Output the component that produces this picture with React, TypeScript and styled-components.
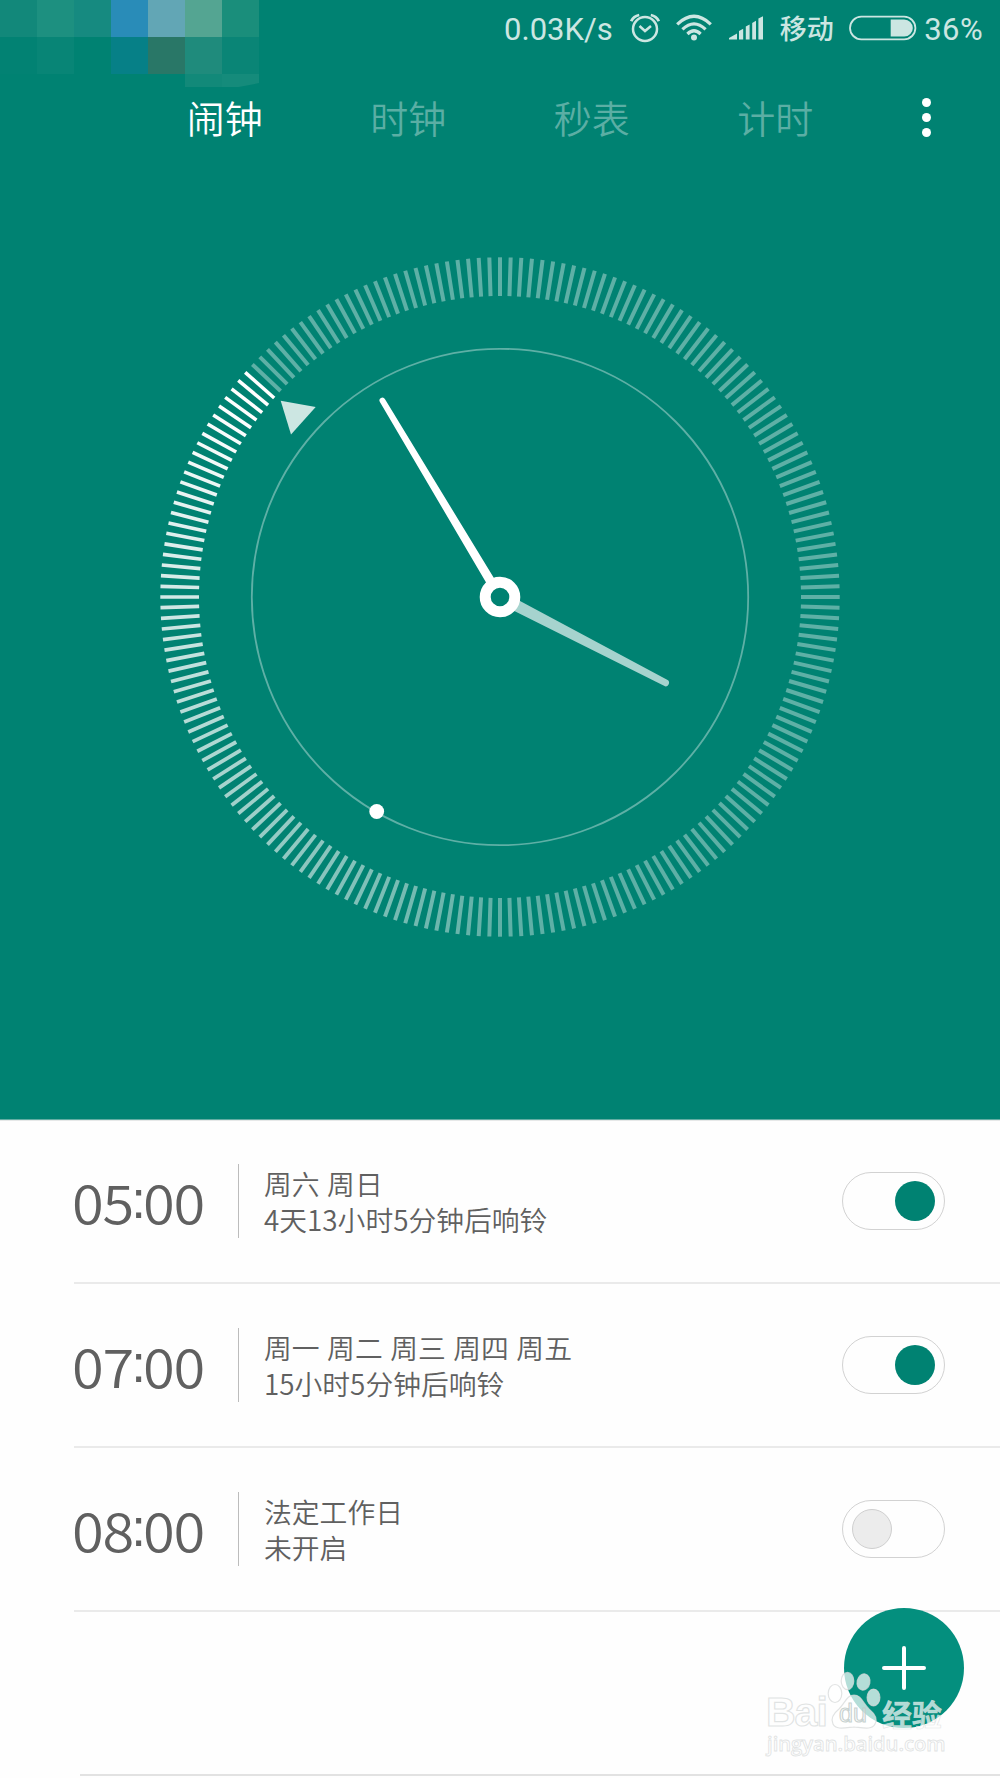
import React from "react";
import styled, { createGlobalStyle } from "styled-components";

const TEAL = "#008272";
const STATUS = "#cce6e2";

const GlobalStyle = createGlobalStyle`
  *, *::before, *::after { box-sizing: border-box; }
  body {
    margin: 0;
    background: #fefefe;
    font-family: "Noto Sans CJK SC", "Noto Sans", sans-serif;
  }
`;

const Screen = styled.div`
  position: relative;
  width: 1000px;
  height: 1778px;
  overflow: hidden;
  background: #fefefe;
  display: flex;
  flex-direction: column;
`;

const Header = styled.header`
  position: relative;
  height: 1120px;
  flex: none;
  background: ${TEAL};
  border-bottom: 1px solid #62aca2;
  box-shadow: 0 1px 0 #e6e8e8;
  display: flex;
  flex-direction: column;
`;

const StatusBar = styled.div`
  height: 56px;
  display: flex;
  align-items: center;
  justify-content: flex-end;
  padding-right: 17px;
  color: ${STATUS};
`;

const StatusText = styled.span<{ $size: number; $gap: number; $weight?: number; $spacing?: number }>`
  font-family: Roboto, "Noto Sans CJK SC", sans-serif;
  font-size: ${(p) => p.$size}px;
  font-weight: ${(p) => p.$weight ?? 400};
  letter-spacing: ${(p) => p.$spacing ?? 0}px;
  line-height: 56px;
  padding-top: 3px;
  margin-right: ${(p) => p.$gap}px;
  white-space: nowrap;
`;

const StatusIcon = styled.svg<{ $gap: number }>`
  flex: none;
  display: block;
  margin-right: ${(p) => p.$gap}px;
`;

const Mosaic = styled.div`
  position: absolute;
  left: 0;
  top: 0;
  display: grid;
  grid-template-columns: repeat(7, 37px);
  grid-template-rows: 37px 37px 13px;
`;

const Block = styled.div<{ $color: string; $cut?: boolean }>`
  background: ${(p) => p.$color};
  clip-path: ${(p) => (p.$cut ? "polygon(0 0, 100% 0, 100% 70%, 45% 100%, 0 100%)" : "none")};
`;

const TabBar = styled.nav`
  height: 122px;
  display: flex;
  align-items: center;
  padding-left: 133px;
`;

const Tab = styled.button<{ $active?: boolean }>`
  width: 183.5px;
  padding: 0;
  border: 0;
  background: none;
  font-family: inherit;
  font-size: 38px;
  font-weight: 350;
  line-height: 56px;
  color: ${(p) => (p.$active ? "#ffffff" : "#5baea4")};
`;

const MoreButton = styled.button`
  margin-left: 52.5px;
  width: 14px;
  height: 39px;
  padding: 0;
  border: 0;
  background: none;
  display: flex;
  flex-direction: column;
  align-items: center;
  justify-content: space-between;
`;

const Dot = styled.span`
  width: 9px;
  height: 9px;
  border-radius: 50%;
  background: #fff;
`;

const DialWrap = styled.div`
  display: flex;
  justify-content: center;
  padding-top: 69.3px;
`;

const AlarmList = styled.main`
  display: flex;
  flex-direction: column;
  padding-left: 74px;
`;

const AlarmRow = styled.section`
  height: 164px;
  display: flex;
  align-items: center;
  border-bottom: 2px solid #eaeaea;
  padding-right: 55px;
`;

const Time = styled.div`
  width: 166px;
  margin-left: -2px;
  display: flex;
  align-items: center;
  font-size: 54px;
  font-weight: 350;
  line-height: 54px;
  color: #606060;
`;

const Digits = styled.span`
  width: 62px;
  letter-spacing: -1.1px;
  transform: scaleX(1.07);
  transform-origin: left center;
`;

const Colon = styled.span`
  width: 9px;
  display: flex;
  justify-content: center;
  font-family: "Liberation Sans", Arial, sans-serif;
  font-size: 53px;
  line-height: 54px;
  padding-bottom: 3px;
`;

const Info = styled.div`
  flex: 1;
  height: 74px;
  border-left: 1px solid #bcbcbc;
  padding: 0.6px 0 0 25px;
  font-size: 27.8px;
  font-weight: 350;
  line-height: 36px;
  color: #606060;
  word-spacing: 1.3px;
`;

const Line = styled.div`
  white-space: nowrap;
`;

const Switch = styled.button<{ $on: boolean }>`
  width: 103px;
  height: 58px;
  border: 1.4px solid #d2d2d2;
  border-radius: 29px;
  background: #fefefe;
  padding: 0 9px;
  display: flex;
  align-items: center;
  justify-content: ${(p) => (p.$on ? "flex-end" : "flex-start")};
`;

const Knob = styled.span<{ $on: boolean }>`
  width: 40px;
  height: 40px;
  border-radius: 50%;
  background: ${(p) => (p.$on ? TEAL : "#ececec")};
  border: ${(p) => (p.$on ? "none" : "1px solid #cfcfcf")};
  margin-top: -1px;
`;

const NextRow = styled.div`
  height: 164px;
  margin-left: 6px;
  border-bottom: 2px solid #e2e2e2;
`;

const AddButton = styled.button`
  position: absolute;
  left: 843.5px;
  top: 1607.5px;
  width: 120.4px;
  height: 120.4px;
  border: 0;
  padding: 0;
  border-radius: 50%;
  background: #048f7e;
  display: flex;
  align-items: center;
  justify-content: center;
`;

const Watermark = styled.div`
  position: absolute;
  left: 767px;
  top: 1670px;
  width: 190px;
  height: 90px;
  color: rgba(255, 255, 255, 0.7);
  -webkit-text-stroke: 1.2px rgba(215, 218, 218, 0.75);
`;

const MarkRow = styled.div`
  position: relative;
  height: 60px;
  display: flex;
  align-items: flex-end;
  font-family: "Liberation Sans", Arial, sans-serif;
  font-weight: 700;
  line-height: 36px;
`;

const Bai = styled.span`
  font-size: 41px;
  width: 63px;
  margin-left: -1px;
  letter-spacing: -1px;
`;

const Paw = styled.svg`
  position: absolute;
  left: 58px;
  top: 0;
`;

const Du = styled.span`
  position: relative;
  width: 53px;
  padding-left: 10px;
  font-size: 25px;
  font-weight: 400;
  line-height: 33px;
  color: rgba(255, 255, 255, 0.3);
  -webkit-text-stroke-color: rgba(190, 202, 200, 0.85);
`;

const Jingyan = styled.span`
  font-family: "Noto Sans CJK SC", sans-serif;
  font-size: 30px;
  font-weight: 700;
  line-height: 33px;
  white-space: nowrap;
  -webkit-text-stroke-width: 0.6px;
`;

const Site = styled.div`
  font-family: "Open Sans", sans-serif;
  font-size: 20.2px;
  font-weight: 600;
  line-height: 28px;
  margin-top: -1px;
  -webkit-text-stroke-width: 0.9px;
`;

const MOSAIC: { color: string; cut?: boolean }[] = [
  { color: "#12887a" }, { color: "#1d9080" }, { color: "#168a80" }, { color: "#298cb8" },
  { color: "#62a6b5" }, { color: "#54a592" }, { color: "#1a8e7b" },
  { color: "#028273" }, { color: "#088576" }, { color: "#008272" }, { color: "#068087" },
  { color: "#297767" }, { color: "#1f8b7c" }, { color: "#0a8576" },
  { color: "transparent" }, { color: "transparent" }, { color: "transparent" }, { color: "transparent" },
  { color: "transparent" }, { color: "#128979" }, { color: "#158b7b", cut: true },
];

const TICK_COUNT = 200;
const HEAD_TICK = 173;
const TAIL_TICK = 100;

const Dial = () => {
  const ticks = Array.from({ length: TICK_COUNT }, (_, i) => {
    const lit = i >= TAIL_TICK && i <= HEAD_TICK;
    const t = lit ? (i - TAIL_TICK) / (HEAD_TICK - TAIL_TICK) : 0;
    return { angle: i * 1.8, opacity: Math.min(1, 0.37 + 0.66 * t), width: 4 - 0.5 * t };
  });
  return (
    <svg width="700" height="700" viewBox="-350 -350 700 700">
      {ticks.map((t) => (
        <line key={t.angle} x1="0" x2="0" y1="-339.7" y2="-301" stroke="#fff"
          strokeWidth={t.width} strokeOpacity={t.opacity} transform={`rotate(${t.angle})`} />
      ))}
      <circle r="248.2" fill="none" stroke="#fff" strokeOpacity="0.37" strokeWidth="1.8" />
      <circle cx="-123.3" cy="214.5" r="7.4" fill="#fff" />
      <path d="M-219.3 -196.3L-184.3 -190L-209 -162.5Z" fill={STATUS} />
      <g transform="rotate(117.4)">
        <path d="M-5.8 -18L-3.4 -186.5A3.4 3.4 0 0 1 3.4 -186.5L5.8 -18Z" fill="#a6d3ce" />
      </g>
      <g transform="rotate(-30.9)">
        <path d="M-4.5 -17L-2.9 -229A2.9 2.9 0 0 1 2.9 -229L4.5 -17Z" fill="#fff" />
      </g>
      <circle r="14.8" fill={TEAL} stroke="#fff" strokeWidth="11" />
    </svg>
  );
};

const AlarmIcon = () => (
  <StatusIcon $gap={16} width="30" height="30" viewBox="0 0 30 30" fill="none" stroke={STATUS}>
    <circle cx="15" cy="16" r="12" strokeWidth="2.5" />
    <path d="M9.5 13L15 18L21 13" strokeWidth="2.5" />
    <path d="M1.2 8.2Q3.5 3.2 9.2 2" strokeWidth="2.8" />
    <path d="M28.8 8.2Q26.5 3.2 20.8 2" strokeWidth="2.8" />
  </StatusIcon>
);

const WifiIcon = () => (
  <StatusIcon $gap={16} width="36" height="28" viewBox="0 0 36 28" fill="none" stroke={STATUS} strokeWidth="3.2">
    <path d="M1.2 10.3Q18 -5.8 34.8 10.3" />
    <path d="M6.4 15.4Q18 4.4 29.6 15.4" />
    <path d="M11.4 20Q18 13.6 24.6 20" />
    <circle cx="18" cy="23.4" r="3" fill={STATUS} stroke="none" />
  </StatusIcon>
);

const SignalIcon = () => (
  <StatusIcon $gap={16} width="36" height="24" viewBox="0 0 36 24" fill={STATUS}>
    <path d="M1 23.5V22L9 17.5V23.5Z" />
    <path d="M11 23.5V15L15.2 12.8V23.5Z" />
    <path d="M17.8 23.5V10.5L21.6 8.6V23.5Z" />
    <path d="M24.2 23.5V7L28 4.8V23.5Z" />
    <path d="M30.4 23.5V2.5L35 0.2V23.5Z" />
  </StatusIcon>
);

const BatteryIcon = () => (
  <StatusIcon $gap={7.5} width="68" height="26" viewBox="0 0 68 26">
    <rect x="1" y="1.7" width="65.4" height="22.6" rx="11.3" fill="none" stroke={STATUS} strokeWidth="1.8" />
    <path d="M41.7 4.4H55.2A8.6 8.6 0 0 1 55.2 21.6H41.7Z" fill={STATUS} />
  </StatusIcon>
);

const ALARMS = [
  { time: ["05", "00"], days: "周六 周日", note: "4天13小时5分钟后响铃", on: true },
  { time: ["07", "00"], days: "周一 周二 周三 周四 周五", note: "15小时5分钟后响铃", on: true },
  { time: ["08", "00"], days: "法定工作日", note: "未开启", on: false },
];

export default function App() {
  return (
    <Screen>
      <GlobalStyle />
      <Header>
        <Mosaic>
          {MOSAIC.map((b, i) => <Block key={i} $color={b.color} $cut={b.cut} />)}
        </Mosaic>
        <StatusBar>
          <StatusText $size={31} $gap={17}>0.03K/s</StatusText>
          <AlarmIcon />
          <WifiIcon />
          <SignalIcon />
          <StatusText $size={27} $gap={15} $weight={500}>移动</StatusText>
          <BatteryIcon />
          <StatusText $size={31} $gap={0} $spacing={0.4}>36%</StatusText>
        </StatusBar>
        <TabBar>
          <Tab $active>闹钟</Tab>
          <Tab>时钟</Tab>
          <Tab>秒表</Tab>
          <Tab>计时</Tab>
          <MoreButton aria-label="更多"><Dot /><Dot /><Dot /></MoreButton>
        </TabBar>
        <DialWrap><Dial /></DialWrap>
      </Header>
      <AlarmList>
        {ALARMS.map((a) => (
          <AlarmRow key={a.time[0]}>
            <Time>
              <Digits>{a.time[0]}</Digits>
              <Colon>:</Colon>
              <Digits>{a.time[1]}</Digits>
            </Time>
            <Info>
              <Line>{a.days}</Line>
              <Line>{a.note}</Line>
            </Info>
            <Switch $on={a.on}><Knob $on={a.on} /></Switch>
          </AlarmRow>
        ))}
        <NextRow />
      </AlarmList>
      <AddButton aria-label="添加">
        <svg width="46" height="46" viewBox="0 0 46 46" stroke="#fff" strokeWidth="4" strokeLinecap="round">
          <path d="M23 3V43M3 23H43" />
        </svg>
      </AddButton>
      <Watermark>
        <MarkRow>
          <Bai>Bai</Bai>
          <Paw width="56" height="62" viewBox="0 0 56 62" fill="rgba(255,255,255,0.7)" stroke="rgba(215,218,218,0.75)" strokeWidth="1.2">
            <ellipse cx="10" cy="23.5" rx="6.8" ry="9" />
            <ellipse cx="22.5" cy="11" rx="6.3" ry="8.6" />
            <ellipse cx="38.5" cy="12" rx="6.4" ry="8.2" transform="rotate(12 38.5 12)" />
            <ellipse cx="48.5" cy="27.5" rx="6.4" ry="8.4" />
            <path d="M29 25C36 25 38 33 44 39C50 44 53 49 50 54C47 60 39 58 29 57C19 58 11 60 8 54C5 48 9 43 14 39C20 33 22 25 29 25Z" />
          </Paw>
          <Du>du</Du>
          <Jingyan>经验</Jingyan>
        </MarkRow>
        <Site>jingyan.baidu.com</Site>
      </Watermark>
    </Screen>
  );
}
